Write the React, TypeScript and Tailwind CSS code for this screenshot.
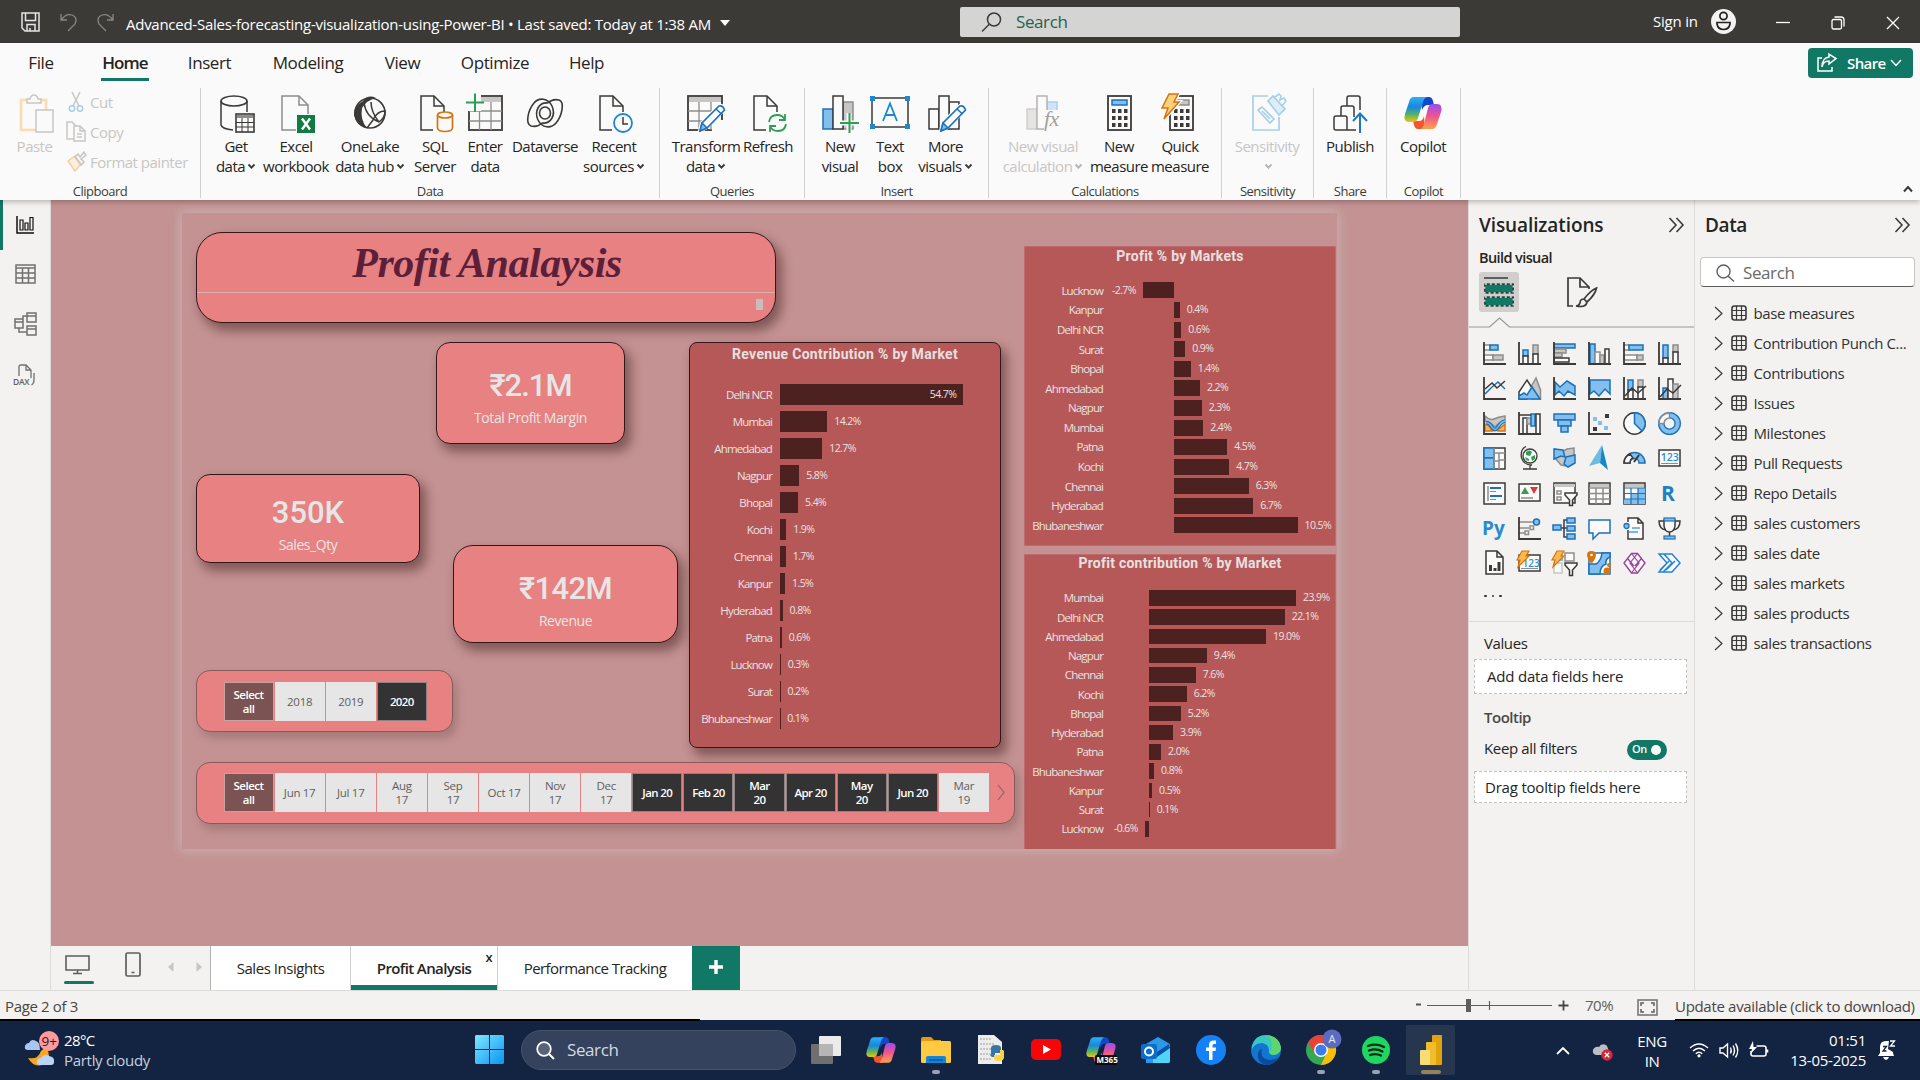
import React, { ReactNode } from "react";

const D = "#3b3a39";
const B = "#83beec";
const S = "#1a72ba";
const G = "#c8c6c4";
const W = "#fafafa";
const GS = "#8f8d8b";

type SvgProps = { w: number; h: number; vb?: string; children: ReactNode; className?: string };
const Svg = ({ w, h, vb, children, className = "" }: SvgProps) => (
  <svg width={w} height={h} viewBox={vb ?? `0 0 ${w} ${h}`} fill="none" className={`shrink-0 overflow-visible ${className}`}>
    {children}
  </svg>
);
const R = ({ r, f = "none", s = "none", sw = 1.5 }: { r: number[]; f?: string; s?: string; sw?: number }) => (
  <rect x={r[0]} y={r[1]} width={r[2]} height={r[3]} rx={r[4] ?? 0} fill={f} stroke={s} strokeWidth={sw} />
);
const P = ({ d, f = "none", s = D, sw = 1.5 }: { d: string; f?: string; s?: string; sw?: number }) => (
  <path d={d} fill={f} stroke={s} strokeWidth={sw} />
);

/* ---------- Shared glyphs ---------- */

const Copilot = ({ id, size = 38 }: { id: string; size?: number }) => (
  <Svg w={size} h={size} vb="0 0 38 38">
    <defs>
      <linearGradient id={`${id}a`} x1="0" y1="0" x2="0" y2="1">
        <stop offset="0" stopColor="#29b1f5" />
        <stop offset=".4" stopColor="#1a86dd" />
        <stop offset=".7" stopColor="#52b46a" />
        <stop offset="1" stopColor="#f5c400" />
      </linearGradient>
      <linearGradient id={`${id}b`} x1="0" y1="0" x2="0" y2="1">
        <stop offset="0" stopColor="#9a4bf0" />
        <stop offset=".5" stopColor="#f0568c" />
        <stop offset="1" stopColor="#ffa24a" />
      </linearGradient>
    </defs>
    <path d="M17 3H25Q28 3 29 7L30 11H24Q20 11 18 16Z" fill="#1447c8" />
    <path d="M21 35H14Q11 35 10 31L9 27H15Q19 27 20 22Z" fill="#f2562e" />
    <path d="M10 3H23Q20 4 19 8L14 24Q13 28 9 28H5Q-1 28 1 20L5 8Q6 3 10 3Z" fill={`url(#${id}a)`} />
    <path d="M28 35H17Q19 34 20 30L24 14Q25 10 29 10H33Q39 10 37 18L33 30Q32 35 28 35Z" fill={`url(#${id}b)`} />
  </Svg>
);

const Caret = ({ c = D }: { c?: string }) => (
  <Svg w={9} h={7} className="ml-[2px] inline-block">
    <P d="M1.5 1.5L4.5 4.7L7.5 1.5" s={c} sw={1.9} />
  </Svg>
);

const Pencil = () => (
  <g>
    <path d="M13 38L15 30L32 13Q36 12 37 16L20 34Z" fill={W} stroke={W} strokeWidth="4" />
    <path d="M13 38L15 30L32 13Q36 12 37.5 17L20 35Z" fill={W} stroke={S} strokeWidth="1.6" />
    <path d="M13 38L15 30L20 35Z M29 16L34.500 21" fill={B} stroke={S} strokeWidth="1.5" />
  </g>
);
const PageCut = () => (
  <g>
    <P d="M17 37H5V3H18L28 13V19" f={W} />
    <P d="M18 3V13H28" />
  </g>
);

const ICON: Record<string, ReactNode> = {
  getdata: (
    <Svg w={38} h={40}>
      <ellipse cx="17" cy="8" rx="13" ry="5" stroke={D} strokeWidth="1.6" />
      <P d="M4 8V32Q5 36 16 37M30 8V19" />
      <R r={[19, 21, 18, 18]} f={W} s={D} sw={1.6} />
      <R r={[20, 22, 16, 3]} f={GS} />
      <P d="M25 25V39M31 25V39M19 29.500H37M19 34H37" sw={1} />
    </Svg>
  ),
  excel: (
    <Svg w={38} h={40}>
      <P d="M19 37H5V3H22L31 12V21" s={GS} />
      <P d="M22 3V12H31" s={GS} />
      <R r={[20, 22, 18, 18]} f="#107c41" />
      <P d="M25 25.500L33 36.500M33 25.500L25 36.500" s="#fff" sw={2.5} />
    </Svg>
  ),
  onelake: (
    <Svg w={38} h={40}>
      <circle cx="19" cy="20" r="15" stroke={D} strokeWidth="1.6" />
      <path d="M12 8Q17 1 25 5Q16 7 11 15Q9 27 16 35Q5 33 3 22Q2 14 12 8Z" fill={D} />
      <P d="M13 10Q15 24 28 29Q34 25 34 18Q26 18 22 27L16 35M20 9Q20 19 28 29" />
    </Svg>
  ),
  sql: (
    <Svg w={38} h={40}>
      <PageCut />
      <ellipse cx="29" cy="22" rx="7.500" ry="3" fill={W} stroke="#d9730d" strokeWidth="1.700" />
      <P d="M21.500 22V35Q22 38.500 29 38.500Q36 38.500 36.500 35V22" s="#d9730d" sw={1.7} />
    </Svg>
  ),
  enter: (
    <Svg w={38} h={40}>
      <R r={[3, 3, 33, 34]} s={D} sw={1.8} />
      <R r={[4, 4, 31, 5]} f={G} />
      <P d="M3 18H36M3 28H36M13.500 9V37M25 9V37" s={GS} sw={1.3} />
      <R r={[0, 0, 15, 18]} f={W} />
      <P d="M0 9.500H18M9 0.500V19" s="#2f9e55" sw={2} />
    </Svg>
  ),
  dataverse: (
    <Svg w={38} h={40}>
      <P d="M26 13C22 5 13 4 8 10C2 17 -1 31 5 33C9 34 13 33 16 30" sw={1.6} />
      <P d="M12 27C16 35 25 36 30 30C36 23 39 9 33 7C29 6 25 7 22 10" sw={1.6} />
      <P d="M22 10C13 9 8 18 12 27M16 30C25 31 30 22 26 13" sw={1.6} />
      <ellipse cx="19" cy="20" rx="5.500" ry="6" stroke={D} strokeWidth="1.600" />
    </Svg>
  ),
  recent: (
    <Svg w={38} h={40}>
      <PageCut />
      <circle cx="28" cy="30" r="9" fill={W} stroke="#1e88cf" strokeWidth="1.8" />
      <P d="M28 24V31H33" />
    </Svg>
  ),
  transform: (
    <Svg w={38} h={40}>
      <R r={[1, 3, 34, 34]} s={D} sw={1.8} />
      <R r={[2, 4, 32, 5]} f={G} />
      <P d="M1 18H35M1 28H35M12 9V37M24 9V37" s={GS} sw={1.3} />
      <R r={[25, 27, 12, 12]} f={W} />
      <Pencil />
    </Svg>
  ),
  refresh: (
    <Svg w={38} h={40}>
      <PageCut />
      <P d="M20 29Q21 22 28 22Q34 22 36 27M36 21V27H30M37 31Q36 38 29 38Q23 38 21 33M21 39V33H27" s="#2f9e55" sw={1.8} />
    </Svg>
  ),
  newvisual: (
    <Svg w={38} h={40}>
      <R r={[2, 16, 10, 20]} f={B} s={S} />
      <R r={[22, 9, 10, 27]} f={G} s={GS} />
      <R r={[12, 3, 10, 33]} f={W} s={D} />
      <path d="M28 20V40M19 30H39" stroke={W} strokeWidth="5" />
      <P d="M28.500 20V40M19 30H38" s="#2f9e55" sw={2} />
    </Svg>
  ),
  textbox: (
    <Svg w={40} h={40}>
      <R r={[2, 5, 36, 29]} s={D} />
      {[[0, 3], [35, 3], [0, 31], [35, 31]].map(([x, y]) => (
        <rect key={`${x}-${y}`} x={x} y={y} width="5" height="5" fill="#1e88cf" />
      ))}
      <P d="M13 28L20 10.500L27 28M15.500 22H24.500" s="#1e88cf" sw={1.8} />
    </Svg>
  ),
  more: (
    <Svg w={38} h={40}>
      <R r={[2, 16, 10, 20]} s={D} />
      <R r={[22, 9, 10, 27]} s={D} />
      <R r={[12, 3, 10, 33]} f={W} s={D} />
      <g transform="translate(1 0)"><Pencil /></g>
    </Svg>
  ),
  calc: (
    <Svg w={38} h={40}>
      <R r={[3, 16, 10, 20]} f="#e5e4e2" s="#d2d0ce" />
      <R r={[23, 9, 10, 10]} f="#cfe5f7" s="#a9d0ee" />
      <R r={[13, 3, 10, 33]} f={W} s="#b5b3b1" />
      <rect x="20" y="17" width="19" height="23" fill={W} />
      <text x="20" y="33" fontSize="22" fontStyle="italic" fontFamily="Liberation Serif" fill="#a3a19f">fx</text>
    </Svg>
  ),
  measure: (
    <Svg w={38} h={40}>
      <R r={[8, 3, 23, 34]} s={D} sw={1.8} />
      <R r={[12, 7, 15, 5]} f={B} s={S} />
      {[0, 1, 2].map((i) => [0, 1, 2].map((j) => <rect key={`${i}${j}`} x={12 + i * 6} y={16 + j * 7} width="3.500" height="4" fill={D} />))}
    </Svg>
  ),
  quick: (
    <Svg w={38} h={40}>
      <R r={[9, 3, 23, 34]} s={D} sw={1.8} />
      <R r={[13, 7, 15, 5]} f={G} s={GS} />
      {[0, 1, 2].map((i) => [0, 1, 2].map((j) => <rect key={`${i}${j}`} x={13 + i * 6} y={16 + j * 7} width="3.500" height="4" fill={D} />))}
      <path d="M8 1H17L13 9H18L3 26L7 15H1Z" fill="#fcd17e" stroke={W} strokeWidth="4" />
      <path d="M8 1H17L13 9H18L3 26L7 15H1Z" fill="#fcd17e" stroke="#d9730d" strokeWidth="1.500" />
    </Svg>
  ),
  sens: (
    <Svg w={38} h={40}>
      <P d="M20 3H5V37H31V24" s="#a6cfe8" sw={1.7} />
      <P d="M10 17L14 14L26 26L22 30ZM14 18L22 26" s="#a6cfe8" sw={1.6} />
      <P d="M20 8L25 3L37 16L31 22Z" s="#a6cfe8" f="#dceefa" sw={1.7} />
      <P d="M27 4L31 1L33 3L32 7L36 5L38 8L34 13" s="#a6cfe8" sw={1.6} />
    </Svg>
  ),
  publish: (
    <Svg w={38} h={40}>
      <P d="M29 17V5Q29 3 27 3H18Q16 3 16 5V13M23 24V15Q23 13 21 13H12Q10 13 10 15V23M25 37H5Q3 37 3 35V25Q3 23 5 23H14Q16 23 16 25V37" />
      <P d="M29 40V21M22 28L29 20.500L36 28" s="#1e78bf" sw={2} />
    </Svg>
  ),
  copilot: <Copilot id="cr" />,
};

/* ---------- Ribbon ---------- */

type Item = { i: string; a: string; b?: string; caret?: boolean; cls: string; off?: boolean };
const GROUPS: { name: string; cls: string; items: Item[] }[] = [
  {
    name: "Data", cls: "w-[459px]", items: [
      { i: "getdata", a: "Get", b: "data", caret: true, cls: "ml-[12px] w-[46px]" },
      { i: "excel", a: "Excel", b: "workbook", cls: "ml-[3px] w-[68px]" },
      { i: "onelake", a: "OneLake", b: "data hub", caret: true, cls: "ml-[5px] w-[70px]" },
      { i: "sql", a: "SQL", b: "Server", cls: "ml-[8px] w-[44px]" },
      { i: "enter", a: "Enter", b: "data", cls: "ml-[9px] w-[38px]" },
      { i: "dataverse", a: "Dataverse", cls: "ml-[7px] w-[68px]" },
      { i: "recent", a: "Recent", b: "sources", caret: true, cls: "ml-[4px] w-[62px]" },
    ],
  },
  {
    name: "Queries", cls: "w-[145px]", items: [
      { i: "transform", a: "Transform", b: "data", caret: true, cls: "ml-[11px] w-[70px]" },
      { i: "refresh", a: "Refresh", cls: "ml-[1px] w-[52px]" },
    ],
  },
  {
    name: "Insert", cls: "w-[184px]", items: [
      { i: "newvisual", a: "New", b: "visual", cls: "ml-[15px] w-[40px]" },
      { i: "textbox", a: "Text", b: "box", cls: "ml-[10px] w-[40px]" },
      { i: "more", a: "More", b: "visuals", caret: true, cls: "ml-[7px] w-[57px]" },
    ],
  },
  {
    name: "Calculations", cls: "w-[233px]", items: [
      { i: "calc", a: "New visual", b: "calculation", caret: true, off: true, cls: "ml-[12px] w-[84px]" },
      { i: "measure", a: "New", b: "measure", cls: "ml-[5px] w-[58px]" },
      { i: "quick", a: "Quick", b: "measure", cls: "ml-[3px] w-[58px]" },
    ],
  },
  { name: "Sensitivity", cls: "w-[92px]", items: [{ i: "sens", a: "Sensitivity", b: "", caret: true, off: true, cls: "ml-[11px] w-[68px]" }] },
  { name: "Share", cls: "w-[73px]", items: [{ i: "publish", a: "Publish", cls: "ml-[10px] w-[52px]" }] },
  { name: "Copilot", cls: "w-[74px]", items: [{ i: "copilot", a: "Copilot", cls: "ml-[10px] w-[52px]" }] },
];

const GroupLabel = ({ children }: { children: ReactNode }) => (
  <div className="-mb-px text-center text-[13px] leading-[16px] tracking-[-0.5px] text-[#3b3a39]">{children}</div>
);

const RibbonGroup = ({ g }: { g: (typeof GROUPS)[number] }) => (
  <div className={`flex h-[110px] shrink-0 flex-col justify-between border-r border-[#d2d0ce] ${g.cls}`}>
    <div className="flex">
      {g.items.map((it) => (
        <div key={it.i} className={`flex shrink-0 flex-col items-center pt-[5px] text-[15px] leading-5 tracking-[-0.5px] whitespace-nowrap ${it.off ? "text-[#c8c6c4]" : "text-[#252423]"} ${it.cls}`}>
          <div className="flex h-10 items-center">{ICON[it.i]}</div>
          <div className="mt-[3px]">{it.a}</div>
          <div className="flex h-5 items-center">
            {it.b}
            {it.caret && <Caret c={it.off ? "#b5b3b1" : D} />}
          </div>
        </div>
      ))}
    </div>
    <GroupLabel>{g.name}</GroupLabel>
  </div>
);

const Clipboard = () => (
  <div className="flex h-[110px] w-[201px] shrink-0 flex-col justify-between border-r border-[#d2d0ce]">
    <div className="flex">
      <div className="ml-[13px] flex w-[43px] flex-col items-center pt-[5px] text-[15px] leading-5 tracking-[-0.5px] text-[#c8c6c4]">
        <Svg w={36} h={40} className="ml-[5px]">
          <R r={[2, 7, 25, 30]} s="#fbdcae" sw={2.6} />
          <P d="M8 10V6H11Q12 2 15 2T19 6H22V10Z" f={W} s={G} />
          <R r={[17, 17, 17, 22]} f={W} s={G} />
        </Svg>
        <div className="mt-[3px]">Paste</div>
      </div>
      <div className="-mt-px ml-[10px] flex flex-col text-[15px] tracking-[-0.5px] text-[#c8c6c4]">
        <div className="flex h-[30px] items-center gap-[4px]">
          <Svg w={20} h={22}>
            <P d="M6 1L13 15M14 1L7 15" s={G} />
            <circle cx="6" cy="17.500" r="2.700" stroke="#a6cfe8" strokeWidth="1.500" />
            <circle cx="14" cy="17.500" r="2.700" stroke="#a6cfe8" strokeWidth="1.500" />
          </Svg>
          Cut
        </div>
        <div className="flex h-[30px] items-center gap-[4px]">
          <Svg w={20} h={22}>
            <P d="M8 18H1V1H6L10 5" s={G} />
            <P d="M8 5H14L19 10V20H8ZM14 5V10H19M11 13H16M11 16H16" s={G} />
          </Svg>
          Copy
        </div>
        <div className="flex h-[30px] items-center gap-[4px]">
          <Svg w={20} h={22}>
            <P d="M2 10L9 5L15 13L9 20Z" s="#f3cfa0" f="#fdeeda" />
            <P d="M9 6L12 3L14 6L18 1L20 4L15 8L18 11L15 14Z" s={G} />
          </Svg>
          Format painter
        </div>
      </div>
    </div>
    <GroupLabel>Clipboard</GroupLabel>
  </div>
);

const TitleBar = () => (
  <header className="flex h-[43px] items-center bg-[#3b3a37] text-white">
    <div className="flex w-[126px] items-center pl-[21px]">
      <Svg w={19} h={20}>
        <P d="M1 1H18V19H4L1 16ZM4.500 1V8.500H14.500V1M6 19V12.500H14V19M9 16V19" s="#e6e6e6" />
      </Svg>
      <Svg w={17} h={20} className="ml-[20px]">
        <P d="M1 2V8H7M1 8Q6 1 12 3T15 12L8 19" s="#8a8886" sw={1.3} />
      </Svg>
      <Svg w={17} h={20} className="ml-[20px]">
        <P d="M16 2V8H10M16 8Q11 1 5 3T2 12L9 19" s="#8a8886" sw={1.3} />
      </Svg>
    </div>
    <div className="mt-[6px] flex w-[834px] items-center text-[15px] tracking-[-0.265px] whitespace-nowrap">
      Advanced-Sales-forecasting-visualization-using-Power-BI • Last saved: Today at 1:38 AM
      <Svg w={12} h={7} className="mb-[2px] ml-[8px]"><path d="M1 0H11L6 6Z" fill="#fff" /></Svg>
    </div>
    <div className="flex h-[30px] w-[500px] items-center rounded-[2px] bg-[#d4d4d2] text-[17px] tracking-[-0.4px] text-[#1f6350]">
      <Svg w={20} h={20} className="mr-[15px] ml-[21px]">
        <circle cx="13" cy="7.500" r="6.500" stroke={D} strokeWidth="1.500" />
        <P d="M8.500 12L1 19.500" />
      </Svg>
      Search
    </div>
    <div className="ml-[193px] w-[58px] text-[15px] tracking-[-0.2px]">Sign in</div>
    <Svg w={25} h={25}>
      <circle cx="12.500" cy="12.500" r="12.500" fill="#f3f2f1" />
      <circle cx="12.500" cy="7" r="3.600" stroke="#222" strokeWidth="1.700" />
      <P d="M6 13.500H19V15Q18 20.500 12.500 20.500T6 15Z" s="#222" sw={1.7} />
    </Svg>
    <div className="ml-auto flex items-center gap-[41px] pt-[2px] pr-[20px]">
      <Svg w={14} h={14}><P d="M0 6.500H14" s="#fff" sw={1.3} /></Svg>
      <Svg w={14} h={14}><P d="M3.500 1H10Q13 1 13 4V10.500" s="#fff" sw={1.3} /><R r={[1, 3.5, 9.5, 9.5, 1.5]} s="#fff" sw={1.3} /></Svg>
      <Svg w={14} h={14}><P d="M1 1L13 13M13 1L1 13" s="#fff" sw={1.3} /></Svg>
    </div>
  </header>
);

const TABS: [string, string][] = [
  ["File", "ml-[26px] w-[30px]"],
  ["Home", "ml-[45px] w-[48px]"],
  ["Insert", "ml-[39px] w-[43px]"],
  ["Modeling", "ml-[40px] w-[74px]"],
  ["View", "ml-[39px] w-[37px]"],
  ["Optimize", "ml-[39px] w-[70px]"],
  ["Help", "ml-[38px] w-[37px]"],
];

const Ribbon = () => (
  <section className="relative z-10 h-[157px] bg-[#fafafa] shadow-[0_2px_5px_rgba(0,0,0,0.25)]">
    <div className="flex h-[45px] items-start text-[17px] tracking-[-0.4px] text-[#252423]">
      {TABS.map(([t, cls]) => (
        <div key={t} className={`flex h-[38px] items-center justify-center whitespace-nowrap ${cls} ${t === "Home" ? "border-b-[3px] border-[#117865] pt-[4px] font-semibold tracking-[-0.9px]" : "pt-[1px]"}`}>
          {t}
        </div>
      ))}
      <div className="mt-[5px] mr-[7px] ml-auto flex h-[30px] w-[105px] items-center rounded-[4px] bg-[#117865] pl-[9px] text-[15px] font-semibold tracking-[-0.6px] text-white">
        <Svg w={20} h={20} className="mr-[10px]">
          <P d="M5 5H1V18H15V14M5 14Q6 8 12 8V11L19 5.500L12 1V4Q5 5 5 14Z" s="#fff" />
        </Svg>
        Share
        <Svg w={12} h={8} className="ml-[4px]"><P d="M1 1L6 6.500L11 1" s="#fff" /></Svg>
      </div>
    </div>
    <div className="flex">
      <Clipboard />
      {GROUPS.map((g) => <RibbonGroup key={g.name} g={g} />)}
      <Svg w={10} h={8} className="mt-[97px] mr-[7px] ml-auto"><P d="M1 6.500L5 2L9 6.500" sw={2} /></Svg>
    </div>
  </section>
);

/* ---------- Left rail ---------- */

const Rail = () => (
  <nav className="flex w-[51px] shrink-0 flex-col border-r border-[#dddbd9] bg-[#f3f2f0]">
    <div className="flex h-[50px] items-center border-l-[3px] border-[#117865] pl-[13px]">
      <Svg w={18} h={18}>
        <P d="M1 0V17H18" s="#111" />
        <P d="M4 14V4H7V14ZM9 14V7H12V14ZM14 14V1.500H17V14Z" s="#111" sw={1.2} />
      </Svg>
    </div>
    <div className="flex h-[48px] items-center pl-[15px]">
      <Svg w={21} h={20}>
        <R r={[1, 1, 19, 18]} s="#72706e" />
        <P d="M1 4H20M1 9H20M1 14H20M7.500 4V19M13.500 4V19" s="#72706e" />
      </Svg>
    </div>
    <div className="flex h-[52px] items-center pl-[14px]">
      <Svg w={24} h={24}>
        <P d="M13 1H22V10H13ZM13 4H22M13 14H22V23H13ZM13 17H22M1 7H9V16H1ZM1 10H9M9 9V4H13M5 16V20H13" s="#72706e" />
      </Svg>
    </div>
    <div className="flex h-[50px] items-center pl-[13px]">
      <Svg w={24} h={22}>
        <P d="M6 12V3Q6 1 8 1H13L18 6V14M13 1V6H18M21 9V16Q21 19.500 18.500 21" s="#72706e" sw={1.3} />
        <text x="0" y="21" fontSize="8.500" fontWeight="600" fontFamily="Open Sans" letterSpacing="-0.3" fill="#605e5c">DAX</text>
      </Svg>
    </div>
  </nav>
);

/* ---------- Report page ---------- */

const CARD = "absolute flex flex-col items-center border border-[#33181a] bg-[#e88181] text-[#e6e6e6] shadow-[5px_7px_11px_1px_rgba(60,25,25,0.48)]";

const Kpi = ({ value, label, cls }: { value: ReactNode; label: string; cls: string }) => (
  <div className={`${CARD} ${cls}`}>
    <div className="font-['Roboto'] text-[31px] leading-9 font-medium">{value}</div>
    <div className="mt-[5px] text-[14px] leading-[18px] tracking-[-0.45px]">{label}</div>
  </div>
);

type Row = [string, number, number];
type ChartProps = {
  title: string; rows: Row[]; cls: string; titleCls: string; rowCls: string; barCls: string;
  labelCls: string; zeroCls: string; inside?: boolean;
};
const BarChart = ({ title, rows, cls, titleCls, rowCls, barCls, labelCls, zeroCls, inside }: ChartProps) => (
  <div className={`absolute bg-[#b75858] text-[#e8e2e2] ${cls}`}>
    <div className={`text-center font-['Roboto'] text-[14px] leading-[18px] font-bold whitespace-nowrap text-[#e6e0e0] ${titleCls}`}>{title}</div>
    {rows.map(([name, v, w], i) => {
      const bar = <div className={`shrink-0 bg-[#4e2121] ${barCls}`} style={{ width: w }} />;
      const val = <span className="shrink-0 text-[10.500px] tracking-[-0.6px]">{v.toFixed(1)}%</span>;
      return (
        <div key={name} className={`flex items-center ${rowCls}`}>
          <div className={`shrink-0 text-right text-[11.500px] tracking-[-0.85px] whitespace-nowrap ${labelCls}`}>{name}</div>
          <div className={`flex shrink-0 items-center justify-end gap-[7px] ${zeroCls}`}>
            {v < 0 && val}
            {v < 0 && bar}
          </div>
          {v >= 0 && inside && i === 0 ? (
            <div className={`flex items-center justify-end bg-[#4e2121] pr-[7px] ${barCls}`} style={{ width: w }}>{val}</div>
          ) : v >= 0 ? (
            <div className="flex items-center gap-[7px]">{bar}{val}</div>
          ) : null}
        </div>
      );
    })}
  </div>
);

const REVENUE: Row[] = [
  ["Delhi NCR", 54.7, 183.5], ["Mumbai", 14.2, 47.5], ["Ahmedabad", 12.7, 42.5], ["Nagpur", 5.8, 19.5], ["Bhopal", 5.4, 18.3],
  ["Kochi", 1.9, 6.5], ["Chennai", 1.7, 6], ["Kanpur", 1.5, 5.3], ["Hyderabad", 0.8, 2.8], ["Patna", 0.6, 2], ["Lucknow", 0.3, 1],
  ["Surat", 0.2, 0.7], ["Bhubaneshwar", 0.1, 0.4],
];
const PROFIT: Row[] = [
  ["Lucknow", -2.7, 31.5], ["Kanpur", 0.4, 5.5], ["Delhi NCR", 0.6, 7], ["Surat", 0.9, 11], ["Bhopal", 1.4, 16.5], ["Ahmedabad", 2.2, 25.7],
  ["Nagpur", 2.3, 27.5], ["Mumbai", 2.4, 29], ["Patna", 4.5, 53], ["Kochi", 4.7, 55], ["Chennai", 6.3, 74.5], ["Hyderabad", 6.7, 79], ["Bhubaneshwar", 10.5, 123.3],
];
const CONTRIB: Row[] = [
  ["Mumbai", 23.9, 147.3], ["Delhi NCR", 22.1, 136], ["Ahmedabad", 19, 117.3], ["Nagpur", 9.4, 58], ["Chennai", 7.6, 47], ["Kochi", 6.2, 38],
  ["Bhopal", 5.2, 32], ["Hyderabad", 3.9, 24.3], ["Patna", 2, 12.3], ["Bhubaneshwar", 0.8, 5.3], ["Kanpur", 0.5, 3.3], ["Surat", 0.1, 1], ["Lucknow", -0.6, 4],
];

type Tile = { t: string; on?: boolean; wrap?: boolean };
const YEARS: Tile[] = [{ t: "2018" }, { t: "2019" }, { t: "2020", on: true }];
const MONTHS: Tile[] = [
  { t: "Jun 17" }, { t: "Jul 17" }, { t: "Aug 17", wrap: true }, { t: "Sep 17", wrap: true }, { t: "Oct 17" }, { t: "Nov 17", wrap: true },
  { t: "Dec 17", wrap: true }, { t: "Jan 20", on: true }, { t: "Feb 20", on: true }, { t: "Mar 20", on: true, wrap: true },
  { t: "Apr 20", on: true }, { t: "May 20", on: true, wrap: true }, { t: "Jun 20", on: true }, { t: "Mar 19", wrap: true },
];
const TILE = "flex h-[39px] w-[50.100px] shrink-0 items-center justify-center pt-[1px] text-center text-[11.500px] leading-[14px]";
const Slicer = ({ tiles, cls, children }: { tiles: Tile[]; cls: string; children?: ReactNode }) => (
  <div className={`absolute flex h-[62px] items-center gap-[1px] rounded-[14px] border-[1.5px] border-[#865b5b] bg-[#e88181] pl-[26.500px] shadow-[4px_6px_9px_rgba(90,60,60,0.28)] ${cls}`}>
    <div className={`${TILE} border border-[#c7a1a1] bg-[#7c5353] px-[8px] font-semibold tracking-[-0.5px] text-white`}>Select all</div>
    {tiles.map(({ t, on, wrap }) => (
      <div key={t} className={`${TILE} ${on ? "border-[1.5px] border-[#8f8181] bg-[#333] font-semibold tracking-[-0.6px] text-white" : "bg-[#e6e6e6] tracking-[-0.3px] text-[#5e5e5e]"} ${wrap ? "px-[11px]" : "whitespace-nowrap"}`}>
        {t}
      </div>
    ))}
    {children}
  </div>
);

const ReportPage = () => (
  <main className="relative h-[746px] w-[1417px] bg-[#c49292]">
    <div className="absolute top-[13px] left-[131px] h-[636px] w-[1155px] bg-[#c49292] shadow-[0_0_10px_2px_rgba(200,180,180,0.9)]">
      <div className={`${CARD} top-[18.500px] left-[14px] h-[91px] w-[580px] rounded-[26px]`}>
        <div className="mt-[5px] pb-[3px] pl-[2px] font-['Liberation_Serif'] text-[42px] leading-[50px] font-bold tracking-[-0.5px] text-[#5c1f3a] italic">Profit Analaysis</div>
        <div className="mt-[1px] h-px w-full bg-[#dcaeae]" />
        <div className="mt-[6px] mr-[12px] h-[11px] w-[7px] self-end bg-[#c8bcbc]" />
      </div>
      <Kpi cls="top-[128.500px] left-[254px] h-[102px] w-[189px] rounded-[14px] pt-[25px]" value={<span className="tracking-[-1px]">₹2.1M</span>} label="Total Profit Margin" />
      <Kpi cls="top-[261px] left-[14px] h-[89px] w-[224px] rounded-[14px] pt-[20px]" value="350K" label="Sales_Qty" />
      <Kpi cls="top-[332px] left-[271px] h-[98px] w-[225px] rounded-[20px] pt-[25px]" value={<span className="tracking-[-0.6px]">₹142M</span>} label="Revenue" />
      <BarChart
        title="Revenue Contribution % by Market" rows={REVENUE} inside
        cls="top-[128.500px] left-[507px] h-[406px] w-[312px] rounded-[8px] border border-[#33181a] shadow-[5px_7px_11px_1px_rgba(60,25,25,0.48)]"
        titleCls="pt-[2px] mb-[18.500px] tracking-[0.3px]" rowCls="h-[27.030px]" barCls="h-[21.500px]" labelCls="w-[82px]" zeroCls="w-[7.800px]"
      />
      <BarChart
        title="Profit % by Markets" rows={PROFIT}
        cls="top-[33px] left-[842px] h-[300px] w-[312px] border border-[#bd6b6e]"
        titleCls="mb-[15.700px] tracking-[0.25px]" rowCls="h-[19.580px]" barCls="h-[16px]" labelCls="w-[78px]" zeroCls="w-[71.300px]"
      />
      <BarChart
        title="Profit contribution % by Market" rows={CONTRIB}
        cls="top-[341px] left-[842px] h-[295px] w-[312px] border border-b-0 border-[#bd6b6e]"
        titleCls="-mt-px mb-[16.300px] tracking-[0.25px]" rowCls="h-[19.250px]" barCls="h-[15.500px]" labelCls="w-[78px]" zeroCls="w-[45.800px]"
      />
      <Slicer cls="top-[457px] left-[14px] w-[257px]" tiles={YEARS} />
      <Slicer cls="top-[548.500px] left-[14px] w-[819px]" tiles={MONTHS}>
        <Svg w={8} h={15} className="ml-[7px]"><P d="M1 0L7 7.500L1 15" s="#8d6363" sw={1.2} /></Svg>
      </Slicer>
    </div>
  </main>
);

/* ---------- Visualizations pane ---------- */

const Ax = () => <P d="M1 0V22H23" sw={1.8} />;
const Bolt = () => <path d="M4-1H11L8 4H11L0 15L2 8H-1Z" fill="#fcb94d" stroke="#d9730d" strokeWidth="1.200" />;
const Funnel = () => <P d="M12 11H24V13L19.500 18V23.500H16.500V18L12 13Z" f={W} />;

const VIS: ReactNode[] = [
  <><R r={[1, 3, 6, 5]} f={W} s={GS} /><R r={[7, 3, 8, 5]} f={B} s={S} /><R r={[1, 13, 9, 5]} f={W} s={GS} /><R r={[10, 13, 10, 5]} f={G} s={GS} /><Ax /></>,
  <><R r={[5, 8, 5, 6]} f={B} s={S} /><R r={[5, 14, 5, 8]} f={W} s={D} /><R r={[15, 3, 5, 9]} f={G} s={GS} /><R r={[15, 12, 5, 10]} f={W} s={D} /><Ax /></>,
  <><R r={[1, 2, 21, 4]} f={B} s={S} /><R r={[1, 7, 12, 4]} f={G} s={GS} /><R r={[1, 11, 8, 4]} f={G} s={GS} /><R r={[1, 16, 15, 4]} f={W} s={D} /><Ax /></>,
  <><R r={[2, 2, 5, 20]} f={B} s={S} /><R r={[7, 10, 5, 12]} f={W} s={GS} /><R r={[12, 13, 4, 9]} f={G} s={GS} /><R r={[17, 7, 4, 15]} f={W} s={D} /><Ax /></>,
  <><R r={[1, 3, 5, 5]} f={W} s={GS} /><R r={[6, 3, 14, 5]} f={B} s={S} /><R r={[1, 13, 13, 5]} f={W} s={GS} /><R r={[14, 13, 6, 5]} f={G} s={GS} /><Ax /></>,
  <><R r={[5, 3, 5, 13]} f={B} s={S} /><R r={[5, 16, 5, 6]} f={W} s={D} /><R r={[15, 3, 5, 7]} f={G} s={GS} /><R r={[15, 10, 5, 12]} f={W} s={D} /><Ax /></>,
  <><P d="M2 17L8 11L15 5L22 12" s={S} /><P d="M2 12L9 6L14 11L22 4" /><Ax /></>,
  <><P d="M10 15L18 1L22.500 13V22H14Z" f={G} s={GS} /><P d="M1 15L9 3L16 14L9 22H1Z" f={W} /><P d="M1 22V19L6 16L9 18L14 10L22 22Z" f={B} s={S} /></>,
  <><P d="M2 5L7 10L14 4L22 9V18L15 14L11 19L6 14L2 18Z" f={B} s={S} /><Ax /></>,
  <><P d="M2 3H22V17L17 12L11 19L6 14L2 17Z" f={B} s={S} /><Ax /></>,
  <><R r={[5, 3, 5, 10]} f={B} s={S} /><R r={[5, 13, 5, 9]} f={W} s={D} /><R r={[15, 3, 5, 7]} f={G} s={GS} /><R r={[15, 10, 5, 12]} f={W} s={D} /><P d="M2 19L9 11L15 16L23 9" /><Ax /></>,
  <><R r={[5, 11, 5, 11]} f={B} s={S} /><R r={[10, 2, 5, 20]} f={W} s={D} /><R r={[15, 7, 5, 15]} f={G} s={GS} /><P d="M2 20L9 12L15 16L23 8" /><Ax /></>,
  <><P d="M2 4Q7 9 11 7T22 4V10Q16 10 12 15Q7 10 2 9Z" f={G} s={GS} /><P d="M2 12Q5 12 8 17T22 12V19H15Q12 14 9 19H2Z" f="#fbb45a" s="#d9730d" /><P d="M3 11Q6 10 9 15T15 15T22 9" s={S} sw={3.6} /><P d="M3 11Q6 10 9 15T15 15T22 9" s={B} sw={1.4} /><Ax /></>,
  <><R r={[5, 6, 4, 16]} f={W} s={D} /><R r={[9, 6, 4, 6]} f={G} s={GS} /><R r={[13, 2, 4, 12]} f={B} s={S} /><R r={[18, 2, 4, 20]} f={W} s={D} /><P d="M1 3H13" /><Ax /></>,
  <><R r={[1, 2, 21, 6]} f={B} s={S} /><R r={[5, 8, 13, 6]} f={B} s={S} /><R r={[8, 14, 7, 6]} f={B} s={S} /></>,
  <><R r={[5, 5, 4, 4]} f={B} /><R r={[10, 9, 4, 4]} f={B} /><R r={[17, 2, 4, 4]} f={D} /><R r={[5, 15, 4, 4]} f={D} /><R r={[16, 14, 4, 4]} f={B} /><Ax /></>,
  <><circle cx="11.500" cy="11.500" r="10.700" fill={W} stroke={D} strokeWidth="1.500" /><P d="M11.500 .8A10.700 10.700 0 0 1 19 19L11.500 11.500Z" f={B} s={S} /></>,
  <><circle cx="11.500" cy="11.500" r="8.200" stroke={S} strokeWidth="6.600" /><circle cx="11.500" cy="11.500" r="8.200" stroke={B} strokeWidth="4" /><P d="M1 11.500A10.500 10.500 0 0 1 11.500 1V6A5.500 5.500 0 0 0 6 11.500Z" f={W} s={GS} /></>,
  <><R r={[1, 1, 21, 21]} f={W} s={D} /><R r={[1, 1, 10, 10]} f={B} s={S} /><R r={[1, 11, 10, 11]} f={B} s={S} /><P d="M11 6H22M16 6V22M11 14H16M16 13H22M11 1V22" s={GS} /></>,
  <><circle cx="12" cy="9" r="7" fill={W} stroke={D} strokeWidth="1.300" /><path d="M8 5Q12 2 14 5L12 9L8 8ZM13 10L17 8V12L14 14ZM7 10L11 12V14L8 13Z" fill="#2f9e55" /><P d="M8-.5Q2 2 3.500 11Q6 18 14 18M5 22H19M12 18V22" sw={1.3} /></>,
  <><P d="M2 2L9 5L14 2L21 1V12L13 19L8 18L2 11Z" f={G} s={GS} /><P d="M1 2L10 3L12 10L8 9L1 12Z" f={B} s={S} /><P d="M13 10L22 8V16L15 20L11 17Z" f={B} s={S} /></>,
  <><path d="M14-2L1 19L12 16Z" fill="#6cbcdf" /><path d="M14-2L12 16L20 23Z" fill="#1587c4" /></>,
  <><P d="M1 16A10.500 10.500 0 0 1 22 16H16A4.500 4.500 0 0 0 7 16Z" f={B} s={S} /><P d="M1 16A10.500 10.500 0 0 1 7 7L10 11Q7 12 7 16Z" f={W} /><P d="M11 15L16 8" sw={2} /></>,
  <><R r={[1, 3, 21, 16]} f={W} s={D} /><P d="M3 16.500H20" s={GS} sw={1} /><text x="2.800" y="14" fontSize="10.500" fontWeight="600" fontFamily="Open Sans" fill="#2b8fd4">123</text></>,
  <><R r={[1, 1, 21, 21]} f={W} s={D} /><P d="M5 4V19" s={GS} /><P d="M7 6H18M7 14H19" s={S} sw={2} /><P d="M7 9.500H13M7 17.500H13" s={GS} sw={1.2} /></>,
  <><R r={[1, 2, 21, 17]} f={W} s={D} /><path d="M3 12L7 5L11 12Z" fill="#3c9b55" /><path d="M12 5H20L16 12Z" fill="#d83b3b" /><P d="M3 16H15" s={GS} /></>,
  <><R r={[1, 1, 21, 20]} f={W} s={D} /><P d="M1 3.500H22" s={G} sw={3} /><P d="M4 9H8V12H4ZM4 15H8V18H4Z" s={GS} /><Funnel /></>,
  <><R r={[1, 1, 21, 21]} f={W} s={D} /><P d="M2 3.500H21" s={G} sw={3} /><P d="M1 6H22M1 11.500H22M1 17H22M8 6V22M15 6V22" s={GS} /></>,
  <><R r={[1, 1, 21, 21]} f={W} s={D} /><P d="M2 3.500H21" s={G} sw={3} /><rect x="15" y="6" width="7" height="16" fill={B} /><rect x="8" y="12" width="8" height="10" fill={B} /><rect x="1" y="17" width="8" height="5" fill={B} /><P d="M1 6H22M1 11.500H22M1 17H22M8 6V22M15 6V22" s={S} sw={1.2} /></>,
  <text x="3" y="19" fontSize="21" fontWeight="700" fontFamily="Open Sans" fill="#1e7fc2">R</text>,
  <text x="-1" y="18" fontSize="19" fontWeight="700" fontFamily="Open Sans" fill="#2a8ccc">Py</text>,
  <><P d="M1 5H16M1 11H11M1 16H7" s={GS} /><circle cx="18.500" cy="5" r="3" fill={B} stroke={S} strokeWidth="1.500" /><R r={[12, 9, 3.5, 3.5]} f={W} s={GS} /><R r={[7, 14, 3.5, 3.5]} f={W} s={GS} /><Ax /></>,
  <><P d="M8 11H11M14 3H11V20H14M11 11H14" /><R r={[0, 8, 8, 5]} f={B} s={S} /><R r={[14, 1, 8, 5]} f={B} s={S} /><R r={[14, 9, 8, 5]} f={B} s={S} /><R r={[14, 17, 8, 5]} f={B} s={S} /></>,
  <P d="M1 3H22V16H11L5 22V16H1Z" f={W} s={S} />,
  <><P d="M5 5V1H15L20 6V22H5V13M15 1V6H20" f={W} /><circle cx="3.500" cy="9" r="2.500" fill={B} stroke={S} strokeWidth="1.300" /><P d="M9 11H17M6 15H15" s="#4ea3dd" /></>,
  <><P d="M6 4H1Q1 12 8 13M17 4H22Q22 12 15 13M11.500 15V19" /><P d="M6 3H17V9Q16 15 11.500 15T6 9Z" f={W} /><R r={[6, 1, 11, 3]} f={B} s={S} sw={1.2} /><R r={[6, 19, 11, 3]} f={B} s={S} sw={1.2} /></>,
  <><P d="M3-1H14L20 5V22H3ZM14-1V5H20" f={W} /><path d="M6 13H9V19H6ZM10.500 16H13.500V19H10.500ZM14.500 10H17.500V19H14.500Z" fill={D} /></>,
  <><R r={[1, 3, 21, 16]} f={W} s={D} /><P d="M3 16.500H20" s={GS} sw={1} /><text x="4.500" y="14.500" fontSize="10" fontWeight="600" fontFamily="Open Sans" fill="#2b8fd4">123</text><Bolt /></>,
  <><R r={[12, 1, 9, 8]} f={W} s={GS} /><R r={[1, 11, 8, 10]} f={W} s={G} /><R r={[6, 3, 4, 6]} f={B} /><Funnel /><Bolt /></>,
  <><R r={[1, 1, 21, 21]} f={W} s={S} /><P d="M1 12V22H12Q12 14 18 12Q17 7 22 5V1H14Q13 9 8 12Z" f={B} s={S} /><path d="M3.500 12Q-1 6-1 3Q-1-1 3.500-1T8 3Q8 6 3.500 12Z" fill="#d9730d" /><circle cx="3.500" cy="3" r="1.300" fill="#fff" /><circle cx="19" cy="19" r="3.500" fill="#d9730d" /><circle cx="21" cy="13" r="2" fill="#d9730d" /></>,
  <><P d="M8.500 1.500H14.500L22 11L14.500 21H8.500L1 11Z" f={W} s="#9b3fa0" sw={1.4} /><P d="M8.500 1.500L16 11L8.500 21M14.500 1.500L7 11L14.500 21M4.500 6.500L11 14M18.500 6.500L12 14" s="#9b3fa0" sw={1.2} /></>,
  <P d="M1 2H14L22 11L14 20H1L9 11ZM6 2L14 11L5 20M2 18L11 9M8 18L17 9" f={W} s="#2583d8" />,
];

const DROP = "ml-[5px] flex w-[213px] items-center border border-dashed border-[#c4c2c0] bg-white text-[15px] tracking-[-0.2px]";
const Chevrons = () => <Svg w={17} h={16}><P d="M1.500 1L8 8L1.500 15M8.500 1L15 8L8.500 15" sw={1.6} /></Svg>;

const VisualPane = () => (
  <aside className="flex w-[227px] shrink-0 flex-col border-x border-[#dddbd9] bg-[#f3f2f0] text-[15px] text-[#252423]">
    <div className="mt-[12px] flex h-[26px] items-center justify-between pr-[9px] pl-[10px]">
      <h2 className="text-[19px] font-semibold tracking-[-0.1px]">Visualizations</h2>
      <Chevrons />
    </div>
    <h3 className="mt-[9px] ml-[10px] h-[22px] text-[14.500px] leading-[22px] font-semibold tracking-[-0.6px]">Build visual</h3>
    <div className="mt-[3px] flex h-[40px] items-center pl-[10px]">
      <div className="flex h-10 w-10 items-center justify-center rounded-[3px] bg-[#d0cfcd]">
        <Svg w={30} h={30}>
          <P d="M0 1H24" />
          <R r={[0.8, 7, 28.4, 9]} f="#117865" s="#222" sw={1.2} />
          <R r={[0.8, 20, 28.4, 9]} f="#117865" s="#222" sw={1.2} />
          <rect x=".8" y="7" width="28.400" height="9" stroke="#e8e8e8" strokeWidth="1.300" strokeDasharray="2 3" />
          <rect x=".8" y="20" width="28.400" height="9" stroke="#e8e8e8" strokeWidth="1.300" strokeDasharray="2 3" />
        </Svg>
      </div>
      <Svg w={31} h={31} className="ml-[48px]">
        <P d="M6 29H1V1H13L22 10V12M13 1V10H22" sw={1.7} />
        <P d="M29.500 11Q24 13 17 22L20 25Q28 18 29.500 11ZM17 22Q13 22 13 26Q12 29 9 29Q19 31 20 25" sw={1.7} />
      </Svg>
    </div>
    <Svg w={225} h={11} className="mt-[5px]"><P d="M0 10H20.500L30.500 1L40.500 10H225" s="#979593" sw={1.2} /></Svg>
    <div className="mt-[14px] ml-[14px] grid w-[210px] grid-cols-6 gap-y-[12px]">
      {VIS.map((v, i) => (
        <svg key={i} width={23} height={23} viewBox="0 0 23 23" fill="none" className="overflow-visible">{v}</svg>
      ))}
    </div>
    <div className="mt-[8px] ml-[15px] flex h-[26px] items-center gap-[5px]">
      {[0, 1, 2].map((i) => <span key={i} className="h-[2.500px] w-[2.500px] rounded-full bg-[#333]" />)}
    </div>
    <div className="mt-[12px] border-t border-[#dddbd9]" />
    <div className="mt-[11px] ml-[15px] h-5 leading-5 tracking-[-0.4px]">Values</div>
    <div className={`mt-[6px] h-[35px] pl-[12px] ${DROP}`}>Add data fields here</div>
    <div className="mt-[13px] ml-[15px] h-5 leading-5 font-semibold tracking-[-0.5px] text-[#4a4846]">Tooltip</div>
    <div className="mt-[11px] ml-[15px] flex h-[22px] items-center justify-between pt-px pr-[27px]">
      <span className="-mt-[3px] tracking-[-0.35px]">Keep all filters</span>
      <span className="flex h-5 w-10 items-center rounded-full bg-[#117865] pl-[5px] text-[11px] font-semibold tracking-[-0.3px] text-white">
        On<span className="mr-[6px] ml-auto h-[10px] w-[10px] rounded-full bg-white" />
      </span>
    </div>
    <div className={`mt-[11px] h-[32px] pl-[10px] ${DROP}`}>Drag tooltip fields here</div>
  </aside>
);

const TABLES = ["base measures", "Contribution Punch C...", "Contributions", "Issues", "Milestones", "Pull Requests", "Repo Details", "sales customers", "sales date", "sales markets", "sales products", "sales transactions"];

const DataPane = () => (
  <aside className="flex w-[225px] shrink-0 flex-col bg-[#f3f2f0] text-[15px] text-[#323130]">
    <div className="mt-[12px] flex h-[26px] items-center justify-between pr-[9px] pl-[10px]">
      <h2 className="text-[19px] font-semibold tracking-[-0.4px] text-[#252423]">Data</h2>
      <Chevrons />
    </div>
    <div className="mt-[19px] ml-[5px] flex h-[30px] w-[215px] items-center rounded-[4px] border border-b-[1.5px] border-[#c8c6c4] border-b-[#605e5c] bg-white pt-[2px] text-[17px] tracking-[-0.4px] text-[#6b6967]">
      <Svg w={19} h={18} className="mr-[8px] ml-[15px]">
        <circle cx="7.500" cy="7.500" r="6.500" stroke="#605e5c" strokeWidth="1.400" />
        <P d="M12 12L18 17.500" s="#605e5c" sw={1.4} />
      </Svg>
      Search
    </div>
    <div className="mt-[11px] flex flex-col">
      {TABLES.map((t) => (
        <div key={t} className="flex h-[30px] items-center pl-[19px] tracking-[-0.38px] whitespace-nowrap">
          <Svg w={9} h={15}><P d="M1 1L8 7.500L1 14" sw={1.2} /></Svg>
          <Svg w={16} h={16} className="mr-[6.500px] ml-[8px]">
            <R r={[1, 1, 14, 14, 2.5]} s={D} sw={1.6} />
            <P d="M5.500 1V15M10.500 1V15M1 5.500H15M1 10.500H15" s={D} sw={1.2} />
          </Svg>
          {t}
        </div>
      ))}
    </div>
  </aside>
);

/* ---------- Page tabs, status bar, taskbar ---------- */

const PageTabs = () => (
  <div className="flex h-[44px] bg-[#f3f2f0] text-[15px] tracking-[-0.45px] text-[#252423]">
    <div className="relative flex w-[160px] items-center border-r border-[#b3b1af]">
      <Svg w={25} h={20} className="mb-[7px] ml-[14px]"><P d="M1 1H24V15H1ZM12.500 15V18.500M8 18.500H17" s="#605e5c" sw={1.6} /></Svg>
      <Svg w={16} h={25} className="mb-[8px] ml-[35px]"><R r={[1, 1, 14, 23, 1.5]} s="#605e5c" sw={1.7} /><P d="M6.500 20.500H9.500" s="#605e5c" /></Svg>
      <Svg w={6} h={10} className="mb-[2px] ml-[27px]"><path d="M5.500 0V10L0 5Z" fill="#c8c6c4" /></Svg>
      <Svg w={6} h={10} className="mb-[2px] ml-[22px]"><path d="M.5 0V10L6 5Z" fill="#c8c6c4" /></Svg>
      <div className="absolute top-[35px] left-[13px] h-[3px] w-[30px] rounded bg-[#117865]" />
    </div>
    <div className="flex w-[140px] items-center justify-center border-r border-[#d2d0ce] bg-white">Sales Insights</div>
    <div className="relative flex w-[147px] items-center justify-center border-r border-[#d2d0ce] bg-white font-semibold tracking-[-0.6px]">
      Profit Analysis
      <span className="absolute top-[2px] right-[5px] text-[13px]">x</span>
      <span className="absolute bottom-0 left-0 h-[5px] w-full bg-[#117865]" />
    </div>
    <div className="flex w-[194px] items-center justify-center bg-white tracking-[-0.55px]">Performance Tracking</div>
    <div className="flex w-[48px] items-center justify-center bg-[#117865] pb-[3px]">
      <Svg w={14} h={14}><P d="M7 0V14M0 7H14" s="#fff" sw={3.4} /></Svg>
    </div>
  </div>
);

const StatusBar = () => (
  <footer className="flex h-[30px] items-center border-t border-[#dddbd9] bg-[#f3f2f0] text-[15px] tracking-[-0.35px] text-[#484644]">
    <div className="w-[1413px] pt-[2px] pl-[5px]">Page 2 of 3</div>
    <Svg w={160} h={16} className="mt-[1px]">
      <P d="M3 6.500H8" s="#555" sw={2} />
      <P d="M14 7.500H139M76.500 3V12" s="#605e5c" sw={1.2} />
      <rect x="53" y="1" width="5" height="13" fill="#605e5c" />
      <P d="M145.500 7.500H155.500M150.500 2.500V12.500" s="#484644" sw={1.8} />
    </Svg>
    <div className="-mt-px ml-[12px] w-[52px] tracking-[-0.5px] text-[#605e5c]">70%</div>
    <Svg w={21} h={17} className="mt-[3px]">
      <R r={[1, 1, 19, 15]} s="#807e7c" sw={1.7} />
      <P d="M7 4H4V7M14 4H17V7M7 13H4V10M14 13H17V10" s="#605e5c" sw={1.5} />
    </Svg>
    <div className="ml-[17px] pt-[2px] tracking-[-0.31px] whitespace-nowrap">Update available (click to download)</div>
  </footer>
);

const TASKS: { n: string; dot?: boolean; g: ReactNode }[] = [
  { n: "desk", g: <><rect x="8" y="1" width="22" height="20" rx="1" fill="#eceaea" /><rect x="0" y="9" width="22" height="20" rx="1" fill="#6f6f6f" /><rect x="8" y="9" width="14" height="12" fill="#b5b5b5" /></> },
  { n: "copilot", g: <Copilot id="ct" size={30} /> },
  { n: "files", dot: true, g: <><path d="M0 4Q0 2 2 2H10L13 5H20V10H0Z" fill="#e09b12" /><rect y="6" width="30" height="22" rx="1.500" fill="#fdca42" /><path d="M5 28V23Q5 21 7 21H23Q25 21 25 23V28Z" fill="#1385d6" /><path d="M8 25H22" stroke="#0b5aa0" strokeWidth="1.500" /></> },
  { n: "python", g: <><path d="M2 0H18L26 7V29H2Z" fill="#ececec" /><path d="M4 4H16M4 9H18M4 14H16M4 19H14M4 24H16" stroke="#b8b8b8" strokeWidth="1.500" strokeDasharray="2 1" /><path d="M15 19V13Q15 10 20 10T25 13V18H19V22H16Q13 20 15 19Z" fill="#3775a9" /><path d="M28 16V22Q28 26 23 26T18 23V20H24V15H27Z" fill="#ffd343" /></> },
  { n: "youtube", g: <><rect y="4" width="30" height="21" rx="5" fill="#f60606" /><path d="M12 10V19L20 14.500Z" fill="#fff" /></> },
  { n: "m365", g: <><Copilot id="cm" size={30} /><rect x="9" y="20" width="22" height="10" rx="1.500" fill="#0a0a0a" /><text x="10.500" y="28" fontSize="8" fontWeight="700" fontFamily="Open Sans" fill="#fff">M365</text></> },
  { n: "outlook", g: <><path d="M5 9L17 2L29 9V26Q29 28 27 28H5Z" fill="#2b9ae6" /><path d="M29 10L12 22V28H27Q29 28 29 26Z" fill="#50d4f7" /><path d="M28 9L16 17L16 22L29 13Z" fill="#0a4fa8" /><rect x="0" y="9" width="16" height="15" rx="2" fill="#0a6fcb" /><circle cx="8" cy="16.500" r="4" stroke="#fff" strokeWidth="2" /></> },
  { n: "facebook", g: <><circle cx="15" cy="15" r="15" fill="#1481f5" /><path d="M13 25V16H10V12.500H13V10Q13 5.500 17.500 5.500H20V9H18Q16.500 9 16.500 10.500V12.500H20L19.500 16H16.500V25Z" fill="#fff" /></> },
  { n: "edge", g: <><circle cx="15" cy="15" r="15" fill="#1176cf" /><path d="M1 11Q4 0 15 0Q28 1 30 13Q29 20 22 20Q17 19 18 16Q18 9 11 8Q4 8 1 14Z" fill="#39c8c0" /><path d="M16 0Q29 2 30 13Q29 20 22 20Q18 19 19 17Q24 8 16 0Z" fill="#5fd66b" /><path d="M11 14Q8 24 19 25Q24 25 28 22Q23 30 15 30Q6 28 7 19Q8 14 11 14Z" fill="#0c4a9c" /></> },
  { n: "chrome", dot: true, g: <><circle cx="15" cy="15" r="15" fill="#34a853" /><path d="M2 7.500A15 15 0 0 1 28 7.500L15 12L9 19Z" fill="#ea4335" /><path d="M28 7.500A15 15 0 0 1 15 30L21 17L17 8Z" fill="#fbbc05" /><circle cx="15" cy="15" r="7" fill="#fff" /><circle cx="15" cy="15" r="5.500" fill="#3b7ded" /><circle cx="26" cy="4" r="9.500" fill="#5c6bc0" /><text x="22.500" y="8" fontSize="11" fontFamily="Open Sans" fill="#e8eaf6">A</text></> },
  { n: "spotify", dot: true, g: <><circle cx="15" cy="15" r="14" fill="#1ed760" /><path d="M7 11Q15 8 23 12M8 15.500Q15 13 21.500 16.500M9 20Q15 18 20 20.500" stroke="#0c2a17" strokeWidth="2.300" strokeLinecap="round" /></> },
  { n: "powerbi", g: <><rect x="16" y="0" width="10" height="30" rx="1" fill="#e0a30c" /><rect x="10" y="7" width="10" height="23" rx="1" fill="#f0bd2c" /><rect x="4" y="15" width="10" height="15" rx="1" fill="#f8dc78" /></> },
];

const Taskbar = () => (
  <div className="relative flex h-[60px] items-center bg-[#132442] text-white">
    <div className="flex w-[475px] items-center pl-[24px]">
      <Svg w={36} h={36}>
        <path d="M4 26Q14 28 17 19L22 15Q28 24 22 31Q11 38 4 26Z" fill="#f6a623" />
        <path d="M4 18Q0 18 1 14Q2 11 5 11Q7 6 12 9Q16 10 16 18Z" fill="#a8c6f2" />
        <path d="M16 33Q12 33 13 29Q14 26 17 26Q20 21 25 24Q31 25 30 30Q30 33 27 33Z" fill="#bcd4f7" />
        <circle cx="25" cy="9" r="10" fill="#ff9a9e" />
        <text x="17.500" y="13.500" fontSize="13.500" fontFamily="Open Sans" fill="#1b1b1b">9+</text>
      </Svg>
      <div className="ml-[4px] text-[15px] leading-5 tracking-[-0.3px]">
        <div className="tracking-[-0.6px] text-white">28°C</div>
        <div className="text-[#c9d0dc]">Partly cloudy</div>
      </div>
    </div>
    <Svg w={30} h={30}>
      <defs><linearGradient id="win" x1="0" y1="0" x2="1" y2="1"><stop offset="0" stopColor="#7de8fc" /><stop offset="1" stopColor="#0a94f4" /></linearGradient></defs>
      <path d="M1 0H14V14H0V1ZM15 0H28L29 1V14H15ZM0 15H14V29H1L0 28ZM15 15H29V28L28 29H15Z" fill="url(#win)" />
    </Svg>
    <div className="ml-[16px] flex h-10 w-[275px] items-center rounded-full border border-[#46536a] bg-[#34425d] text-[17px] tracking-[-0.4px] text-[#d5d9e0]">
      <Svg w={19} h={19} className="mr-[12px] ml-[14px]">
        <circle cx="8" cy="8" r="6.800" stroke="#fff" strokeWidth="1.700" fill="#56637b" />
        <P d="M13 13L18 18" s="#fff" sw={2} />
      </Svg>
      Search
    </div>
    <div className="ml-[2px] flex">
      {TASKS.map((t) => (
        <div key={t.n} className={`relative flex h-[50px] w-[55px] items-center justify-center rounded ${t.n === "powerbi" ? "bg-[#26364f] bg-clip-content px-[3px]" : ""}`}>
          <svg width={30} height={30} viewBox="0 0 30 30" fill="none" className="overflow-visible">{t.g}</svg>
          {t.dot && <span className="absolute bottom-[1px] h-[4px] w-[8px] rounded-full bg-[#9aa1ad]" />}
          {t.n === "powerbi" && <span className="absolute bottom-[1px] h-[4px] w-[20px] rounded-full bg-[#96815f]" />}
        </div>
      ))}
    </div>
    <div className="ml-auto flex items-center">
      <Svg w={14} h={9}><P d="M1 8L7 2L13 8" s="#fff" sw={1.8} /></Svg>
      <Svg w={22} h={18} className="mt-[3px] ml-[22px]">
        <path d="M4 12Q0 11 1 7Q3 3 7 4Q9 0 14 2Q17 4 16 12Z" fill="#b9bdc5" />
        <circle cx="15" cy="12" r="5.700" fill="#d62839" />
        <P d="M12.800 9.800L17.200 14.200M17.200 9.800L12.800 14.200" s="#fff" sw={1.3} />
      </Svg>
      <div className="mt-[2px] ml-[18px] w-[40px] text-center text-[15px] leading-5 tracking-[-0.4px]">ENG<br />IN</div>
      <Svg w={20} h={16} className="ml-[17px]">
        <P d="M1 6Q10-2 19 6M4 9Q10 3.500 16 9M6.800 11.800Q10 8.500 13.200 11.800" s="#fff" sw={1.5} />
        <circle cx="10" cy="13.800" r="1.600" fill="#fff" />
      </Svg>
      <Svg w={20} h={17} className="ml-[10px]">
        <P d="M1 6H4L8.500 2V15L4 11H1ZM11.500 5.500Q13 8.500 11.500 11.500M14 3.500Q17 8.500 14 13.500M16.500 1.500Q21 8.500 16.500 15.500" s="#fff" sw={1.4} />
      </Svg>
      <Svg w={20} h={17} className="ml-[10px]">
        <P d="M7.500 4H15Q17 4 17 6V12Q17 14 15 14H4Q2 14 2 12V9M18.500 7.500V10.500" s="#fff" sw={1.6} />
        <path d="M4 -1L0 7H3L1.500 12L8 5H4.500Z" fill="#fff" />
      </Svg>
      <div className="w-[97px] text-right text-[15px] leading-5 tracking-[-0.25px]">01:51<br />13-05-2025</div>
      <Svg w={18} h={20} className="mr-[24px] ml-[12px]">
        <path d="M0 16L2 13V7Q2 1 8 1H11L10 9L15 12V13L16 16ZM5 17H11Q10 20 8 20T5 17Z" fill="#fff" />
        <path d="M5 6.500H8.500L5 11H8.500" stroke="#132442" strokeWidth="1.300" />
        <P d="M12 1H16.500L12.500 6H17" s="#fff" sw={1.3} />
      </Svg>
    </div>
    <div className="absolute top-[-1px] left-0 h-[1.500px] w-[700px] bg-black" />
    <div className="absolute top-[-1px] right-0 h-[1.500px] w-[245px] bg-black" />
  </div>
);

export default function App() {
  return (
    <div className="relative flex h-[1080px] w-[1920px] flex-col overflow-hidden bg-[#f3f2f0] font-['Open_Sans',sans-serif]">
      <TitleBar />
      <Ribbon />
      <div className="flex h-[790px]">
        <Rail />
        <div className="flex w-[1417px] shrink-0 flex-col">
          <ReportPage />
          <PageTabs />
        </div>
        <VisualPane />
        <DataPane />
      </div>
      <StatusBar />
      <Taskbar />
    </div>
  );
}
